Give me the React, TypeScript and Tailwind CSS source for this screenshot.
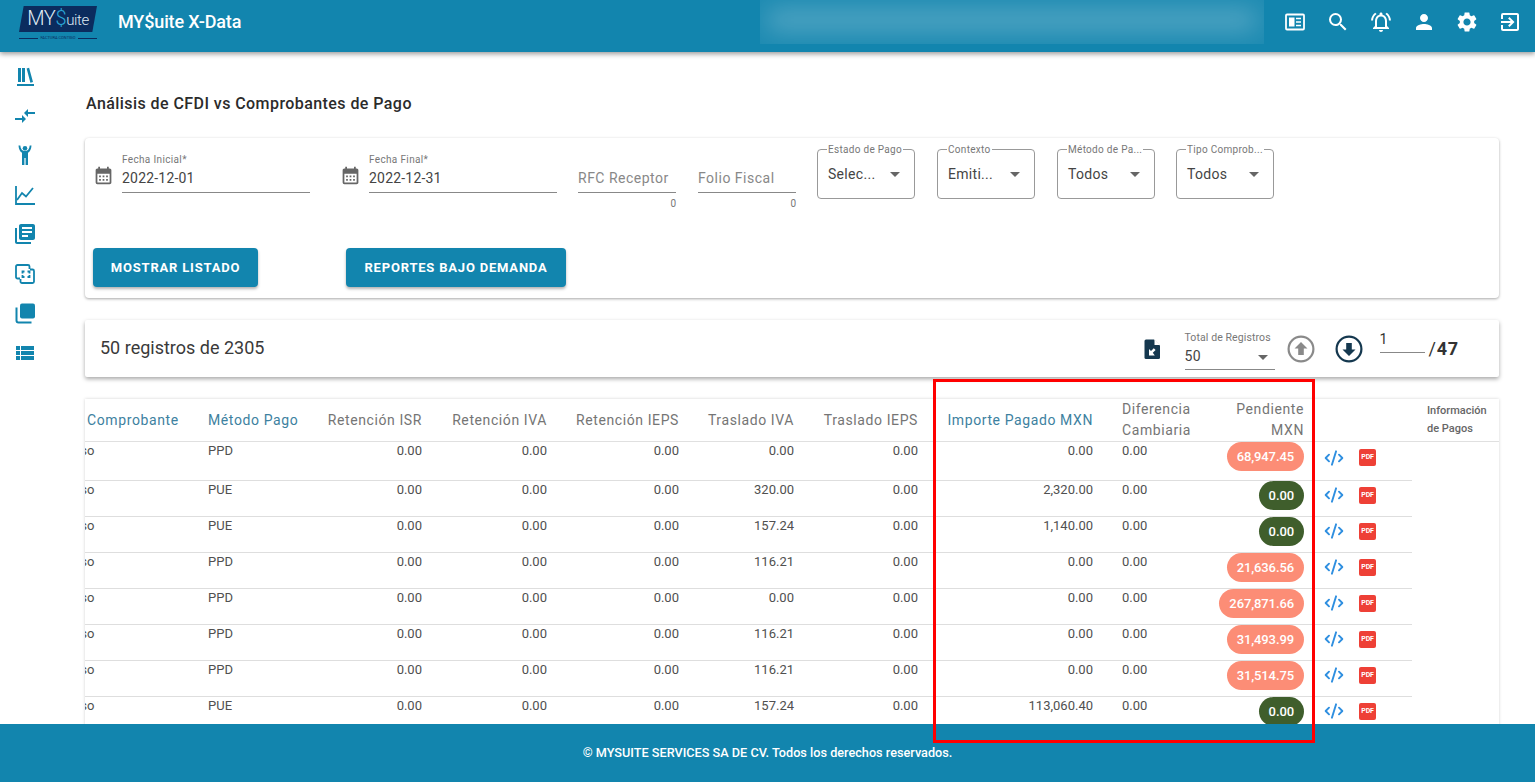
import { MdCompareArrows, MdLibraryBooks, MdViewList, MdSearch, MdOutlineNotificationsActive, MdPerson, MdSettings, MdOutlineExitToApp, MdCalendarMonth, MdArrowDropDown } from "react-icons/md";
import { CodeXml } from "lucide-react";

const rows = [
  { m: "PPD", t: "0.00", imp: "0.00", pen: "68,947.45", ok: false },
  { m: "PUE", t: "320.00", imp: "2,320.00", pen: "0.00", ok: true },
  { m: "PUE", t: "157.24", imp: "1,140.00", pen: "0.00", ok: true },
  { m: "PPD", t: "116.21", imp: "0.00", pen: "21,636.56", ok: false },
  { m: "PPD", t: "0.00", imp: "0.00", pen: "267,871.66", ok: false },
  { m: "PPD", t: "116.21", imp: "0.00", pen: "31,493.99", ok: false },
  { m: "PPD", t: "116.21", imp: "0.00", pen: "31,514.75", ok: false },
  { m: "PUE", t: "157.24", imp: "113,060.40", pen: "0.00", ok: true },
];

function Sidebar() {
  return (
    <aside className="w-[50px] shrink-0 flex flex-col items-center pt-[12px] gap-[15.5px] text-[#1285ae]">
      <svg width="24" height="24" viewBox="0 0 24 24" fill="currentColor"><path d="M5 4h3v14H5zM9 4h3v14H9zM13.600 4.400l2.500-.7 3.900 14.300-2.600.7zM4 20h17v2H4z" /></svg>
      <MdCompareArrows size={24} />
      <svg width="24" height="24" viewBox="0 0 24 24" fill="currentColor"><circle cx="12" cy="5.200" r="2.300" /><path d="M5.500 2.500h1.800c.2 3 1.800 5.200 3.200 5.200h3c1.400 0 3-2.200 3.200-5.200h1.800c-.2 3.600-1.500 6.300-3.500 7.200V22h-2.400v-7h-1.200v7H9V9.700C7 8.800 5.700 6.100 5.500 2.500z" /></svg>
      <svg width="24" height="24" viewBox="0 0 24 24" fill="none" stroke="currentColor" strokeWidth="1.800"><path d="M3 3v18h19" /><path d="M4 17l5-7 4 3.500 7-8.500" /></svg>
      <MdLibraryBooks size={24} />
      <svg width="24" height="24" viewBox="0 0 24 24" fill="none" stroke="currentColor" strokeWidth="1.800"><path d="M7 16.500H4.500a1.500 1.500 0 0 1-1.500-1.500V4.500A1.500 1.500 0 0 1 4.500 3H15a1.500 1.500 0 0 1 1.500 1.500V7" /><path d="M17 7.500h2.500A1.500 1.500 0 0 1 21 9v10.500a1.500 1.500 0 0 1-1.500 1.500H9a1.500 1.500 0 0 1-1.500-1.500V17" /><path d="M9.500 11.500v-2h2M14.500 9.500h2v2M16.500 13v2h-2M11.500 15h-2v-2" /></svg>
      <svg width="24" height="24" viewBox="0 0 24 24" fill="currentColor"><rect x="7" y="2.500" width="15" height="15" rx="2" /><path d="M2.500 6.500h2v13a1 1 0 0 0 1 1h13v2h-13a3 3 0 0 1-3-3z" /></svg>
      <MdViewList size={24} />
    </aside>
  );
}

function DateField({ label, value, className }: { label: string; value: string; className: string }) {
  return (
    <div className={`flex items-start shrink-0 ${className}`}>
      <MdCalendarMonth size={21} className="text-[#666] mt-[16px] mr-[8px]" />
      <div className="w-[188px]">
        <div className="text-[10px] leading-[12px] pt-[5px] text-[#777] tracking-[0.35px]">{label}</div>
        <div className="text-[14px] leading-[18px] mt-[3px] pb-[5px] text-[#444] tracking-[0.2px] border-b border-[#888]">{value}</div>
      </div>
    </div>
  );
}

function TextField({ label, className }: { label: string; className: string }) {
  return (
    <div className={`w-[98px] shrink-0 pt-[20px] ${className}`}>
      <div className="text-[14px] leading-[18px] pb-[5px] text-[#888] tracking-[0.5px] border-b border-[#888]">{label}</div>
      <div className="text-[10px] leading-[12px] mt-[5px] text-right text-[#777]">0</div>
    </div>
  );
}

function SelectBox({ label, value, className }: { label: string; value: string; className: string }) {
  return (
    <fieldset className={`w-[98px] h-[56px] -mt-[6px] shrink-0 border border-[#999] rounded-[4px] pl-[5px] pr-[7px] flex flex-col ${className}`}>
      <legend className="text-[10px] leading-[10px] pt-[2px] text-[#777] px-[1px] ml-[4px] tracking-[0.3px] whitespace-nowrap">{label}</legend>
      <div className="flex items-center justify-between pl-[5px] mt-[7px] text-[14px] leading-[24px] text-[#444] tracking-[0.3px]">
        <span>{value}</span>
        <MdArrowDropDown size={24} className="text-[#666]" />
      </div>
    </fieldset>
  );
}

function Th({ children, blue, right, className = "" }: any) {
  return (
    <th className={`px-[12px] h-[42px] font-normal text-[14px] leading-[21px] tracking-[0.6px] border-b border-[#e0e0e0] ${blue ? "text-[#3d81a0]" : "text-[#757575]"} ${right ? "text-right" : "text-left"} ${className}`}>
      {children}
    </th>
  );
}

function Td({ children, right, className = "" }: any) {
  return (
    <td className={`px-[12px] pt-0 align-top text-[13px] leading-[18px] text-[#505050] border-b border-[#dedede] ${right ? "text-right" : "text-left"} ${className}`}>
      {children}
    </td>
  );
}

export default function App() {
  return (
    <div className="relative h-[782px] overflow-hidden flex flex-col bg-white font-['Roboto',sans-serif]">
      <header className="relative z-10 h-[52px] shrink-0 flex items-start bg-[#1285ae] text-white shadow-[0_2px_5px_rgba(0,0,0,0.4)]">
        <div className="w-[118px] shrink-0 pl-[19px] pt-[6px]">
          <div className="w-[78px] h-[26px] bg-[#0b2c5e] [clip-path:polygon(6%_0,100%_0,94%_100%,0_100%)] flex items-baseline justify-center text-[20px] leading-[25px] font-light tracking-[-0.4px] text-[#dfeaf3]">
            MY<span className="text-[#2aa7d6]">$</span><span className="text-[15px]">uite</span>
          </div>
          <div className="w-[78px] flex items-center gap-[2px] text-[4px] leading-[6px] mt-[3px] text-[#0b2c5e] whitespace-nowrap">
            <span className="h-px flex-1 bg-[#0b2c5e]" />FACTURA CONTIGO<span className="h-px flex-1 bg-[#0b2c5e]" />
          </div>
        </div>
        <div className="text-[18px] leading-[44px] font-medium tracking-[-0.15px]">MY$uite X-Data</div>
        <div className="ml-auto w-[504px] h-[44px] bg-white/5 overflow-hidden">
          <div className="h-[20px] mt-[10px] mx-[8px] bg-white/25 blur-md" />
        </div>
        <div className="flex gap-[19px] pl-[19px] pr-[13px] pt-[10px]">
          <svg width="24" height="24" viewBox="0 0 24 24" fill="none" stroke="currentColor" strokeWidth="1.800"><rect x="3" y="4.500" width="18" height="15" rx="1" /><rect x="6.500" y="8" width="4.500" height="8" fill="currentColor" strokeWidth="1" /><path d="M13 8.500h5M13 12h5M13 15.500h5" strokeWidth="1.500" /></svg>
          <MdSearch size={24} />
          <MdOutlineNotificationsActive size={24} />
          <MdPerson size={24} />
          <MdSettings size={24} />
          <MdOutlineExitToApp size={24} />
        </div>
      </header>

      <div className="flex flex-1 min-h-0">
        <Sidebar />
        <main className="flex-1 min-w-0 pl-[35px] pr-[36px] overflow-hidden">
          <h2 className="text-[16px] leading-[24px] font-medium text-[#2b2b2b] mt-[40px] pl-[1px] tracking-[0.43px]">Análisis de CFDI vs Comprobantes de Pago</h2>

          <section className="mt-[22px] h-[160px] rounded-[4px] bg-white shadow-[0_1px_3px_rgba(0,0,0,0.35)] pl-[8px] pt-[11px]">
            <div className="flex items-start h-[99px]">
              <DateField label="Fecha Inicial*" value="2022-12-01" className="w-[217px]" />
              <DateField label="Fecha Final*" value="2022-12-31" className="ml-[30px]" />
              <TextField label="RFC Receptor" className="ml-[21px]" />
              <TextField label="Folio Fiscal" className="ml-[22px]" />
              <SelectBox label="Estado de Pago" value="Selec..." className="ml-[21px]" />
              <SelectBox label="Contexto" value="Emiti..." className="ml-[22px]" />
              <SelectBox label="Método de Pa..." value="Todos" className="ml-[22px]" />
              <SelectBox label="Tipo Comprob..." value="Todos" className="ml-[21px]" />
            </div>
            <div className="flex">
              <button className="w-[165px] h-[39px] rounded-[4px] bg-[#1285ae] text-white text-[13px] font-bold tracking-[0.8px] shadow-[0_2px_3px_rgba(0,0,0,0.3)]">MOSTRAR LISTADO</button>
              <button className="w-[220px] h-[39px] ml-[88px] rounded-[4px] bg-[#1285ae] text-white text-[13px] font-bold tracking-[0.8px] shadow-[0_2px_3px_rgba(0,0,0,0.3)]">REPORTES BAJO DEMANDA</button>
            </div>
          </section>

          <section className="mt-[22px] h-[57px] rounded-[2px] bg-white shadow-[0_2px_4px_rgba(0,0,0,0.35)] flex items-center pl-[15px]">
            <div className="text-[18px] text-[#3a3a3a] pb-[2px]">50 registros de 2305</div>
            <svg className="ml-auto" width="24" height="24" viewBox="0 0 24 24" fill="#15384f"><path d="M6 2.500h8l6 6v12a1.500 1.500 0 0 1-1.500 1.500h-12.500A1.500 1.500 0 0 1 4.500 20.500V4A1.500 1.500 0 0 1 6 2.500z" /><path d="M14.500 2.500v5.500h5.500z" fill="#fff" /><path d="M9 18.500v-6.500l2 2 2.800-2.800 1.800 1.800-2.800 2.800 2 2.700z" fill="#fff" /></svg>
            <div className="w-[90px] ml-[21px] self-start mt-[11px]">
              <div className="text-[10.5px] leading-[13px] text-[#777] tracking-[0.1px] whitespace-nowrap">Total de Registros</div>
              <div className="flex items-center justify-between h-[26px] border-b border-[#888] text-[14px] text-[#444] tracking-[0.3px]">
                50<MdArrowDropDown size={24} className="text-[#666]" />
              </div>
            </div>
            <svg className="ml-[12px]" width="28" height="28" viewBox="0 0 28 28"><circle cx="14" cy="14" r="12.400" fill="none" stroke="#8a8a8a" strokeWidth="2.200" /><path d="M14 7l6.500 6.500h-3.700V20h-5.600v-6.500H7.500z" fill="#8a8a8a" /></svg>
            <svg className="ml-[20px]" width="28" height="28" viewBox="0 0 28 28"><circle cx="14" cy="14" r="12.400" fill="none" stroke="#15384f" strokeWidth="2.200" /><path d="M14 21l-6.500-6.500h3.700V8h5.600v6.500h3.700z" fill="#15384f" /></svg>
            <div className="w-[45px] ml-[17px] self-start mt-[10px] h-[23px] border-b border-[#888] text-[14px] leading-[18px] text-[#333]">1</div>
            <div className="ml-[4px] mr-[40px] text-[18px] leading-[24px] font-bold text-[#333] tracking-[0.8px]"><span className="font-normal">/</span>47</div>
          </section>

          <section className="relative mt-[22px] h-[400px] bg-white shadow-[0_0_3px_rgba(0,0,0,0.18)] overflow-hidden">
            <table className="-ml-[60px] w-[1474px] table-fixed border-collapse">
              <colgroup>
                <col className="w-[171px]" />
                <col className="w-[114px]" />
                <col className="w-[124px]" />
                <col className="w-[125px]" />
                <col className="w-[132px]" />
                <col className="w-[115px]" />
                <col className="w-[124px]" />
                <col className="w-[175px]" />
                <col className="w-[100px]" />
                <col className="w-[111px]" />
                <col className="w-[96px]" />
                <col className="w-[87px]" />
              </colgroup>
              <thead>
                <tr>
                  <Th blue className="!pl-[28px] !pr-0 whitespace-nowrap">Tipo Comprobante</Th>
                  <Th blue className="whitespace-nowrap !pr-0">Método Pago</Th>
                  <Th right>Retención ISR</Th>
                  <Th right>Retención IVA</Th>
                  <Th right>Retención IEPS</Th>
                  <Th right>Traslado IVA</Th>
                  <Th right>Traslado IEPS</Th>
                  <Th blue right>Importe Pagado MXN</Th>
                  <Th className="!pl-[17px] !pr-0">Diferencia Cambiaria</Th>
                  <Th right>Pendiente MXN</Th>
                  <Th />
                  <th className="pl-[15px] pr-0 border-b border-[#e0e0e0] text-left text-[11px] leading-[18px] font-medium text-[#666]">Información de Pagos</th>
                </tr>
              </thead>
              <tbody>
                {rows.map((r, i) => (
                  <tr key={i} className={i === 0 ? "h-[39px]" : "h-[36px]"}>
                    <Td className="!pl-[26px]">Ingreso</Td>
                    <Td>{r.m}</Td>
                    <Td right>0.00</Td>
                    <Td right>0.00</Td>
                    <Td right>0.00</Td>
                    <Td right>{r.t}</Td>
                    <Td right>0.00</Td>
                    <Td right>{r.imp}</Td>
                    <Td className="!pl-[17px] !pr-0">0.00</Td>
                    <td className="pr-[12px] pt-0 align-top border-b border-[#dedede] text-right">
                      <span className={`inline-block h-[29px] rounded-full px-[10px] text-[13px] leading-[29px] font-medium tracking-[-0.1px] text-white ${r.ok ? "bg-[#3f5e2c]" : "bg-[#fc8d76]"}`}>{r.pen}</span>
                    </td>
                    <td className="pl-[8px] border-b border-[#dedede]">
                      <div className="flex items-center gap-[15px] -mt-[7px]">
                        <CodeXml size={20} strokeWidth={2.300} className="text-[#2f8fe0]" />
                        <span className="w-[17px] h-[17px] rounded-[2px] bg-[#ee4036] text-white text-[7px] leading-[17px] font-bold text-center tracking-[-0.2px]">PDF</span>
                      </div>
                    </td>
                    <td />
                  </tr>
                ))}
              </tbody>
            </table>
          </section>
        </main>
      </div>

      <footer className="relative z-10 h-[58px] shrink-0 bg-[#1285ae] text-white text-[12.7px] font-medium text-center leading-[58px]">
        © MYSUITE SERVICES SA DE CV. Todos los derechos reservados.
      </footer>

      <div className="absolute z-20 left-[933px] top-[379px] w-[382px] h-[364px] border-[3px] border-[#f00] pointer-events-none" />
    </div>
  );
}
